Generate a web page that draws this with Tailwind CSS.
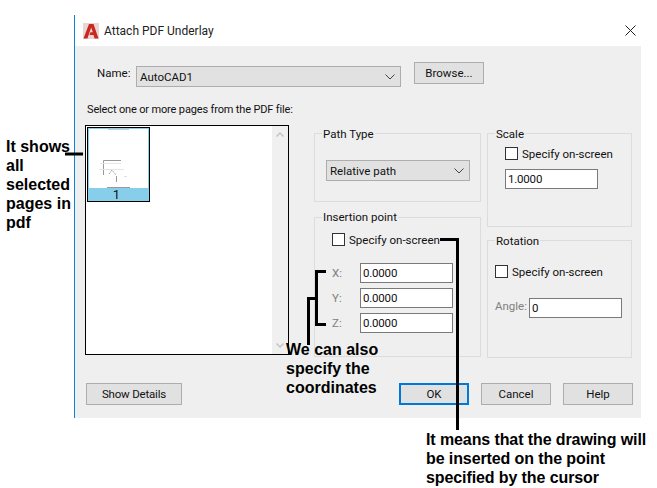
<!DOCTYPE html>
<html><head><meta charset="utf-8">
<script src="https://cdn.jsdelivr.net/npm/@tailwindcss/browser@4"></script>
</head>
<body class="bg-white w-[657px] h-[488px] overflow-hidden relative font-['Roboto',sans-serif] text-[11.5px] leading-[16px] text-[#111]">
<div class="ml-[74px] mt-[15px] w-[567px] h-[403px] border-l border-[#0a84d8] flex flex-col">
  <div class="h-[31px] flex items-center pl-[8px] pr-[5px] bg-white">
    <svg class="w-[16px] h-[16px]" viewBox="0 0 16 16"><rect width="16" height="16" fill="#e9d6d4"/><path d="M0.5 15.5 L6 1 H10.5 L15.5 15.5 H11.5 L10.6 12 H6.4 L7.4 9.2 H9.8 L8.2 4.6 L4.4 15.5 Z" fill="#c9271f"/></svg>
    <span class="ml-[5px] text-[12px] text-[#222]">Attach PDF Underlay</span>
    <svg class="ml-auto w-[11px] h-[11px]" viewBox="0 0 11 11"><path d="M0.5 0.5 L10.5 10.5 M10.5 0.5 L0.5 10.5" stroke="#222" stroke-width="1" fill="none"/></svg>
  </div>
  <div class="flex-1 bg-[#efefef] pt-[16px] flex flex-col">
    <div class="h-[25px] flex pl-[22px]">
      <span class="self-end mb-[6px] w-[39px]">Name:</span>
      <div class="self-end h-[21px] w-[265px] border border-[#adadad] bg-[#e1e1e1] flex items-center pl-[3px] pr-[5px]">
        <span>AutoCAD1</span>
        <svg class="ml-auto w-[10px] h-[6px]" viewBox="0 0 10 6"><path d="M0.5 0.5 L5 5 L9.5 0.5" stroke="#444" fill="none"/></svg>
      </div>
      <div class="ml-[13px] self-start h-[22px] w-[70px] border border-[#adadad] bg-[#e1e1e1] flex items-center justify-center">Browse...</div>
    </div>
    <div class="mt-[15px] flex h-[256px] items-start">
      <div class="ml-[10px] w-[204px]">
        <div class="pl-[2px] h-[16px] whitespace-nowrap text-[11px] tracking-[-0.15px]">Select one or more pages from the PDF file:</div>
        <div class="mt-[7px] h-[230px] border border-black bg-white flex">
          <div class="mt-[1px] ml-[1px] w-[63px] h-[75px] border border-black flex flex-col">
            <div class="flex-1 border border-b-0 border-[#87ceeb] bg-white">
              <svg class="block w-[59px] h-[59px]" viewBox="0 0 59 59"><path d="M19 0.5 H40" stroke="#ccc" stroke-width="1"/><path d="M14.5 46 V31.5 H32" stroke="#999" stroke-width="1" fill="none"/><path d="M11 34.5 H32 M10 40.5 H35" stroke="#e5e5e5" stroke-width="1"/><path d="M20 45 L23 41 L27 46" stroke="#aaa" stroke-width="1" fill="none" stroke-dasharray="2 1"/><path d="M27.5 47 V53" stroke="#999" stroke-width="1"/><path d="M35 47.5 H38" stroke="#ddd" stroke-width="1"/><path d="M18 58.5 H41" stroke="#999" stroke-width="1"/></svg>
            </div>
            <div class="h-[13px] bg-[#87ceeb] text-center pr-[4px] text-[13px] leading-[14px] text-[#111]">1</div>
          </div>
          <div class="ml-auto w-[16px] bg-[#f0f0f0] flex flex-col items-center justify-between pt-[6px] pb-[6px]">
            <svg class="w-[8px] h-[5px]" viewBox="0 0 8 5"><path d="M0.5 4.5 L4 1 L7.5 4.5" stroke="#c4c4c4" stroke-width="1.5" fill="none"/></svg>
            <svg class="w-[8px] h-[5px]" viewBox="0 0 8 5"><path d="M0.5 0.5 L4 4 L7.5 0.5" stroke="#c4c4c4" stroke-width="1.5" fill="none"/></svg>
          </div>
        </div>
      </div>
      <div class="ml-[25px] w-[167px] pt-[31px] flex flex-col gap-[15px]">
        <div class="relative h-[69px] border border-[#dcdcdc] pl-[11px] pt-[26px]">
          <span class="absolute left-[7px] top-[-8px] bg-[#efefef] px-[1px]">Path Type</span>
          <div class="h-[21px] w-[144px] border border-[#adadad] bg-[#e1e1e1] flex items-center pl-[3px] pr-[5px]">
            <span>Relative path</span>
            <svg class="ml-auto w-[10px] h-[6px]" viewBox="0 0 10 6"><path d="M0.5 0.5 L5 5 L9.5 0.5" stroke="#444" fill="none"/></svg>
          </div>
        </div>
        <div class="relative h-[140px] border border-[#dcdcdc] pl-[17px] pt-[15px]">
          <span class="absolute left-[7px] top-[-9px] bg-[#efefef] px-[1px]">Insertion point</span>
          <div class="flex items-center h-[13px]">
            <div class="w-[13px] h-[13px] border border-[#333] bg-white"></div>
            <span class="ml-[4px] whitespace-nowrap">Specify on-screen</span>
          </div>
          <div class="mt-[17px] flex flex-col gap-[5px]">
            <div class="flex items-center h-[20px]"><span class="w-[28px] text-[#808080]">X:</span><div class="w-[93px] h-[20px] border border-[#7a7a7a] bg-white pl-[2px] leading-[18px] tracking-[-0.2px]">0.0000</div></div>
            <div class="flex items-center h-[20px]"><span class="w-[28px] text-[#808080]">Y:</span><div class="w-[93px] h-[20px] border border-[#7a7a7a] bg-white pl-[2px] leading-[18px] tracking-[-0.2px]">0.0000</div></div>
            <div class="flex items-center h-[20px]"><span class="w-[28px] text-[#808080]">Z:</span><div class="w-[93px] h-[20px] border border-[#7a7a7a] bg-white pl-[2px] leading-[18px] tracking-[-0.2px]">0.0000</div></div>
          </div>
        </div>
      </div>
      <div class="ml-[6px] w-[145px] pt-[31px] flex flex-col gap-[13px]">
        <div class="relative h-[94px] border border-[#dcdcdc] pl-[17px] pt-[13px]">
          <span class="absolute left-[7px] top-[-8px] bg-[#efefef] px-[1px]">Scale</span>
          <div class="flex items-center h-[13px]">
            <div class="w-[13px] h-[13px] border border-[#333] bg-white"></div>
            <span class="ml-[4px] whitespace-nowrap">Specify on-screen</span>
          </div>
          <div class="mt-[9px] w-[93px] h-[20px] border border-[#7a7a7a] bg-white pl-[2px] leading-[18px] tracking-[-0.2px]">1.0000</div>
        </div>
        <div class="relative h-[118px] border border-[#dcdcdc] pl-[7px] pt-[24px]">
          <span class="absolute left-[7px] top-[-8px] bg-[#efefef] px-[1px]">Rotation</span>
          <div class="flex items-center h-[13px]">
            <div class="w-[13px] h-[13px] border border-[#333] bg-white"></div>
            <span class="ml-[4px] whitespace-nowrap">Specify on-screen</span>
          </div>
          <div class="mt-[20px] flex h-[20px]">
            <span class="w-[34px] text-[#808080]">Angle:</span>
            <div class="w-[93px] h-[20px] border border-[#7a7a7a] bg-white pl-[2px] leading-[18px]">0</div>
          </div>
        </div>
      </div>
    </div>
    <div class="mt-[25px] flex pl-[11px]">
      <div class="w-[96px] h-[22px] border border-[#adadad] bg-[#e1e1e1] flex items-center justify-center tracking-[-0.2px]">Show Details</div>
      <div class="ml-[217px] w-[70px] h-[22px] border-2 border-[#0078d7] bg-[#e1e1e1] flex items-center justify-center">OK</div>
      <div class="ml-[12px] w-[70px] h-[22px] border border-[#adadad] bg-[#e1e1e1] flex items-center justify-center">Cancel</div>
      <div class="ml-[12px] w-[70px] h-[22px] border border-[#adadad] bg-[#e1e1e1] flex items-center justify-center">Help</div>
    </div>
  </div>
</div>
<svg class="absolute left-0 top-0 w-[657px] h-[488px] pointer-events-none" viewBox="0 0 657 488">
  <g stroke="#000" stroke-width="3" fill="none">
    <path d="M65 154 H83"/>
    <path d="M440 239.5 H457.5 V430"/>
    <path d="M326 271.5 H316.5 V324.5 H326"/>
    <path d="M316 298.5 H308.5 V345"/>
  </g>
</svg>
<div class="absolute left-[6px] top-[137px] w-[70px] font-['Liberation_Sans',sans-serif] font-bold text-[16px] leading-[19px] text-black">It shows<br>all<br>selected<br>pages in<br>pdf</div>
<div class="absolute left-[286px] top-[340px] font-['Liberation_Sans',sans-serif] font-bold text-[16px] leading-[19px] text-black whitespace-nowrap">We can also<br>specify the<br>coordinates</div>
<div class="absolute left-[426px] top-[430px] font-['Liberation_Sans',sans-serif] font-bold text-[16px] leading-[19px] tracking-[-0.1px] text-black whitespace-nowrap">It means that the drawing will<br>be inserted on the point<br>specified by the cursor</div>
</body></html>
